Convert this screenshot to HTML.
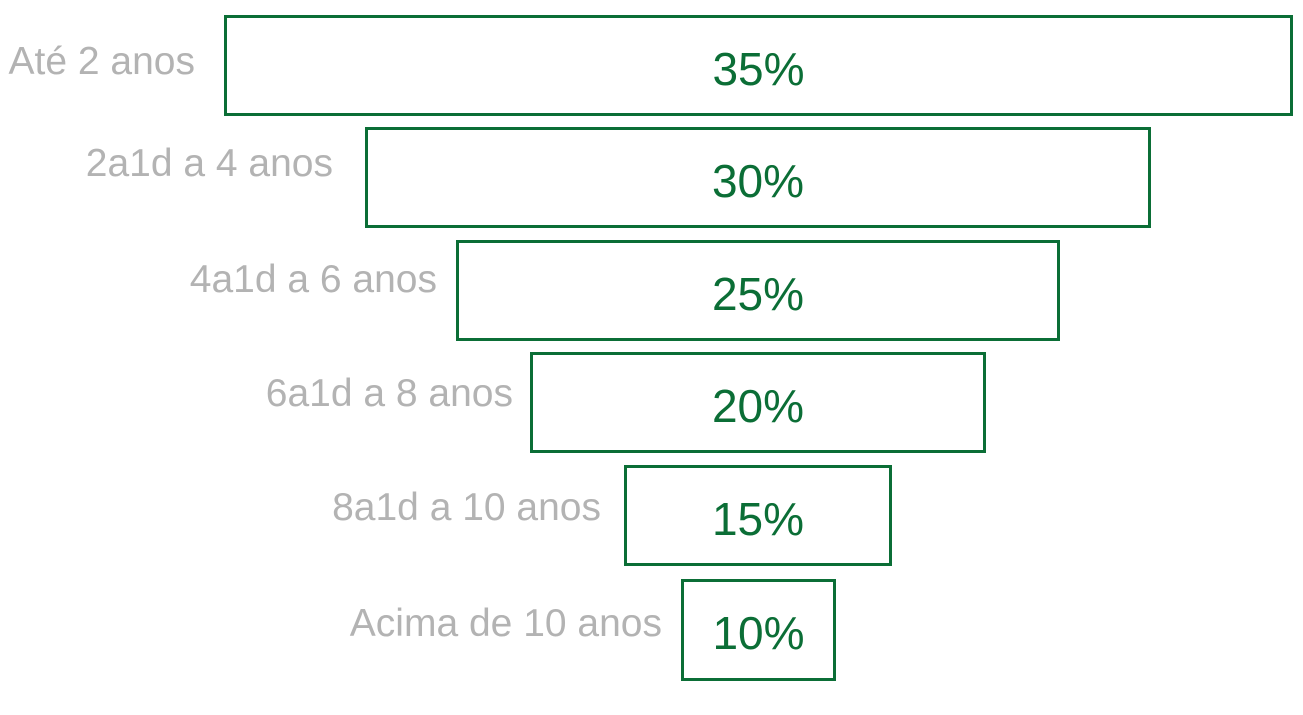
<html><head><style>
body{margin:0;width:1303px;height:715px;background:#fff;position:relative;overflow:hidden;font-family:"Liberation Sans",sans-serif}
.b{position:absolute;box-sizing:border-box;border:3px solid #0b6e36;color:#0b6e36;font-size:46px;text-align:center}
.b span{position:absolute;left:0;right:0;top:24px;line-height:54px}
.l{position:absolute;color:#b3b3b3;font-size:39px;text-align:right;width:700px;line-height:44px}
</style></head><body>
<div class="b" style="left:224px;top:15px;width:1069px;height:101px"><span>35%</span></div>
<div class="b" style="left:365px;top:127px;width:786px;height:101px"><span>30%</span></div>
<div class="b" style="left:456px;top:240px;width:604px;height:101px"><span>25%</span></div>
<div class="b" style="left:530px;top:352px;width:456px;height:101px"><span>20%</span></div>
<div class="b" style="left:624px;top:465px;width:268px;height:101px"><span>15%</span></div>
<div class="b" style="left:681px;top:579px;width:155px;height:102px"><span>10%</span></div>
<div class="l" style="left:-505px;top:40px">Até 2 anos</div>
<div class="l" style="left:-367px;top:142px">2a1d a 4 anos</div>
<div class="l" style="left:-263px;top:258px">4a1d a 6 anos</div>
<div class="l" style="left:-187px;top:372px">6a1d a 8 anos</div>
<div class="l" style="left:-99px;top:486px">8a1d a 10 anos</div>
<div class="l" style="left:-38px;top:602px">Acima de 10 anos</div>
</body></html>
